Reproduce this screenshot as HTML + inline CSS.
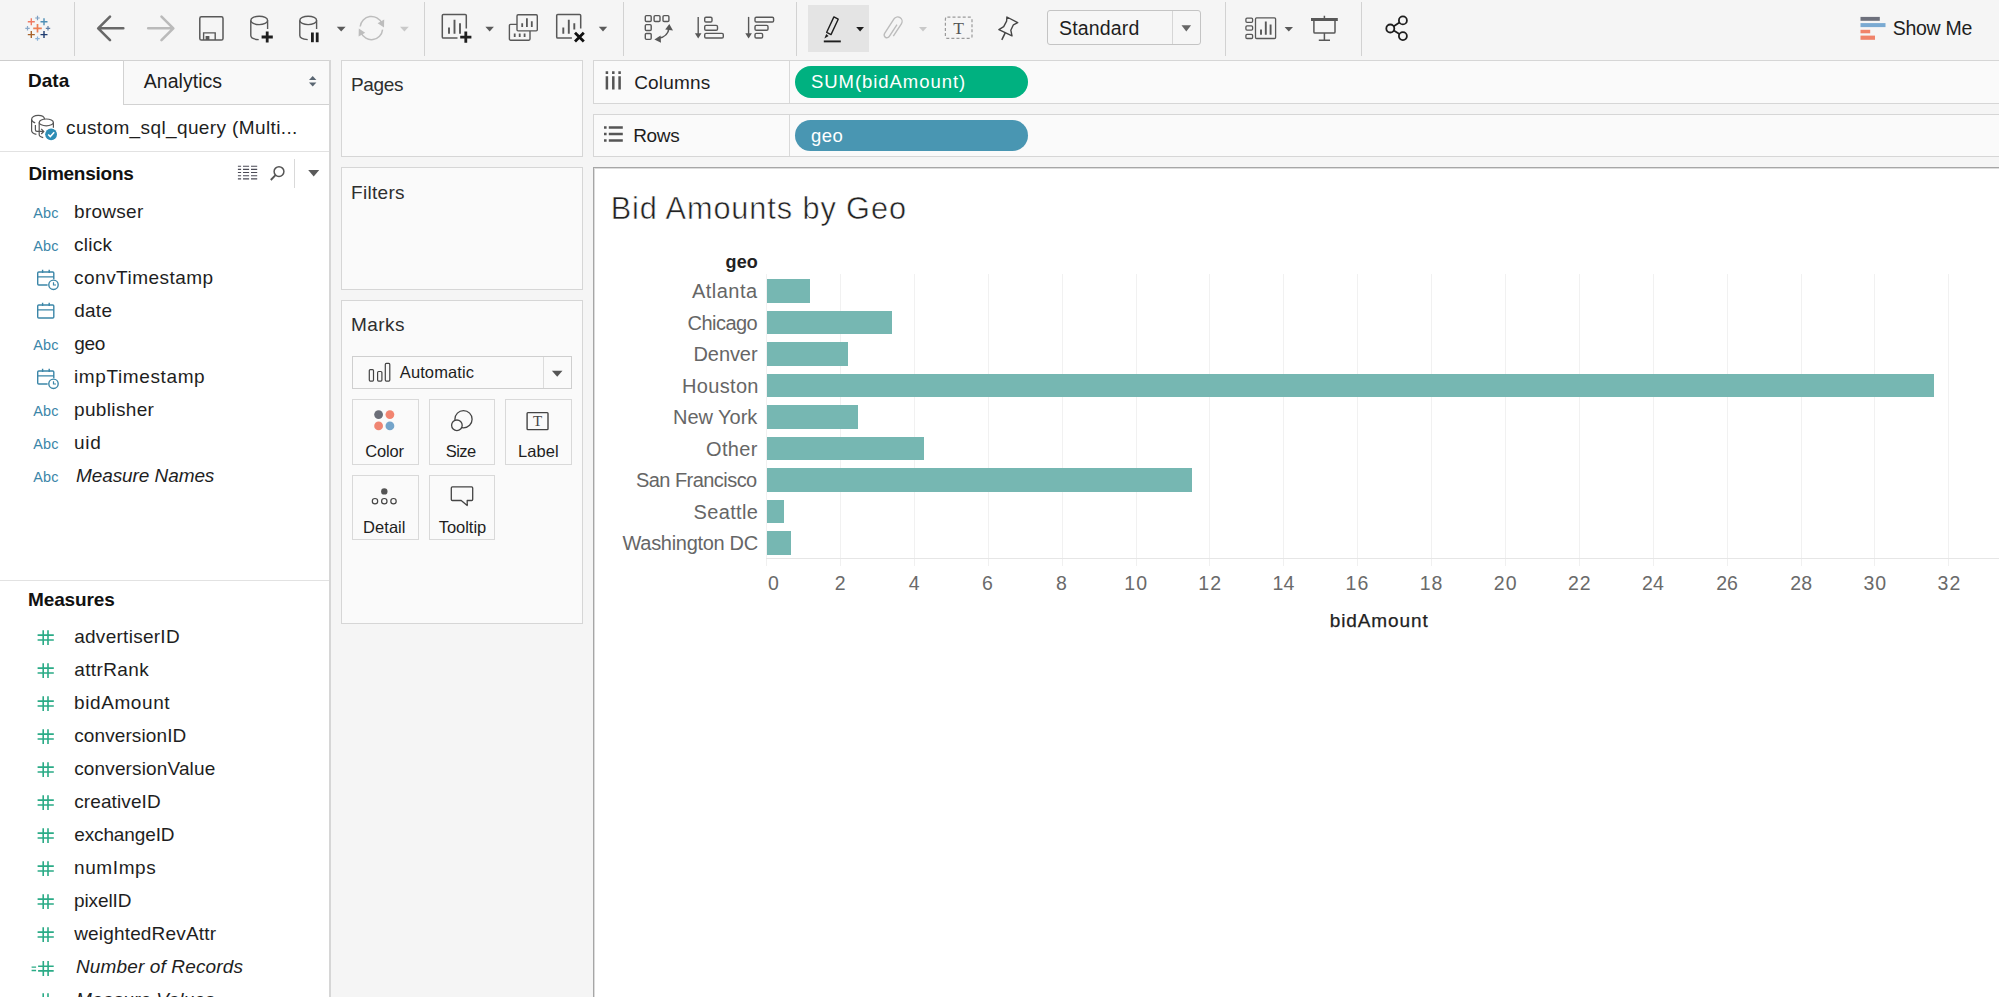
<!DOCTYPE html>
<html lang="en">
<head>
<meta charset="utf-8">
<title>Bid Amounts by Geo</title>
<style>
*{box-sizing:border-box;margin:0;padding:0}
html,body{width:1999px;height:997px;overflow:hidden}
body{position:relative;background:#f5f5f5;font-family:"Liberation Sans",sans-serif;color:#1e1e1e;font-size:18px}
.abs{position:absolute}
.t{position:absolute;white-space:nowrap;line-height:1}
#toolbar{left:0;top:0;width:1999px;height:60px;background:#f5f5f5}
.vsep{position:absolute;top:2px;width:1px;height:54px;background:#d2d2d2}
#left{left:0;top:60px;width:330px;height:937px;background:#fff;border-top:1px solid #cdcdcd}
#leftborder{left:329px;top:60px;width:2px;height:937px;background:#d6d6d6}
#antab{left:123px;top:60px;width:207px;height:45px;background:#f9f9f9;border:1px solid #d2d2d2;border-right:none}
.hline{position:absolute;left:0;width:329px;height:1px;background:#e2e2e2}
.card{position:absolute;background:#fafafa;border:1px solid #d6d6d6}
.mbtn{position:absolute;width:68px;height:66px;border:1px solid #d9d9d9;background:#fafafa}
.shelf{position:absolute;left:593px;width:1410px;height:43px;background:#fafafa;border:1px solid #d6d6d6}
.pill{position:absolute;left:795px;width:233px;border-radius:16px}
#viz{left:593px;top:167px;width:1410px;height:840px;background:#fff;border:1px solid #a6a6a6;box-shadow:inset 1px 1px 0 #dcdcdc}
.bar{position:absolute;left:767px;height:23.55px;background:#76b7b2}
.grid{position:absolute;top:274px;width:1px;height:284px;background:#f1f1f1}
.tick{position:absolute;top:559px;width:1px;height:7px;background:#f0f0f0}
</style>
</head>
<body>
<div id="toolbar" class="abs"></div>
<div class="vsep" style="left:74px"></div>
<div class="vsep" style="left:424px"></div>
<div class="vsep" style="left:623px"></div>
<div class="vsep" style="left:796px"></div>
<div class="vsep" style="left:1225px"></div>
<div class="vsep" style="left:1361px"></div>
<div class="abs" style="left:808px;top:5px;width:61px;height:47px;background:#e4e4e4"></div>
<div class="abs" style="left:1047px;top:10px;width:154px;height:35px;border:1px solid #c4c4c4;border-radius:3px;background:#f6f6f6"></div>
<div class="abs" style="left:1172px;top:11px;width:1px;height:33px;background:#d6d6d6"></div>
<svg class="abs" style="left:0;top:0" width="1999" height="60" viewBox="0 0 1999 60" fill="none" stroke-linecap="butt">
<path d="M33.2 28.3H41.8M37.5 24.0V32.6" stroke="#ec7f55" stroke-width="1.7" fill="none"/>
<path d="M35.3 18H39.7M37.5 15.8V20.2" stroke="#7d9fc2" stroke-width="1.2" fill="none"/>
<path d="M35.3 38.6H39.7M37.5 36.4V40.800000000000004" stroke="#8bb1d6" stroke-width="1.2" fill="none"/>
<path d="M25.3 28.3H29.7M27.5 26.1V30.5" stroke="#8ba9c9" stroke-width="1.2" fill="none"/>
<path d="M45.8 28.3H50.2M48 26.1V30.5" stroke="#5f80a8" stroke-width="1.2" fill="none"/>
<path d="M27.8 21.8H34.8M31.3 18.3V25.3" stroke="#ef7b64" stroke-width="1.4" fill="none"/>
<path d="M40.5 21.8H47.5M44 18.3V25.3" stroke="#4e8fb6" stroke-width="1.4" fill="none"/>
<path d="M27.8 34.6H34.8M31.3 31.1V38.1" stroke="#a8642c" stroke-width="1.4" fill="none"/>
<path d="M40.5 34.6H47.5M44 31.1V38.1" stroke="#1f3c70" stroke-width="1.4" fill="none"/>
<path d="M123.3 28.3H99M110 16.6L98.2 28.3L110 40.1" stroke="#686868" stroke-width="2.6" stroke-linecap="round" stroke-linejoin="round"/>
<path d="M148.2 28.3H172.5M161.5 16.6L173.3 28.3L161.5 40.1" stroke="#bababa" stroke-width="2.6" stroke-linecap="round" stroke-linejoin="round"/>
<rect x="199.8" y="16.8" width="23.2" height="23.2" rx="1.6" stroke="#585858" stroke-width="1.5"/>
<path d="M203.6 40V32.9H215.2V40" stroke="#585858" stroke-width="1.4"/><rect x="205.6" y="36" width="3.8" height="4" fill="#585858"/>
<ellipse cx="259.2" cy="20.4" rx="8.4" ry="4.2" stroke="#585858" stroke-width="1.4"/><path d="M250.79999999999998 20.4V35.6C250.79999999999998 37.8 254.2 39.4 258.7 39.6M267.59999999999997 20.4V29" stroke="#585858" stroke-width="1.4"/>
<path d="M261.59999999999997 37H272.8M267.2 31.4V42.6" stroke="#1e1e1e" stroke-width="2.8" fill="none"/>
<ellipse cx="308.2" cy="20.4" rx="8.4" ry="4.2" stroke="#585858" stroke-width="1.4"/><path d="M299.8 20.4V35.6C299.8 37.8 303.2 39.4 307.7 39.6M316.59999999999997 20.4V29" stroke="#585858" stroke-width="1.4"/>
<rect x="311" y="32.5" width="2.8" height="9.7" fill="#1e1e1e"/><rect x="315.8" y="32.5" width="2.8" height="9.7" fill="#1e1e1e"/>
<path d="M336.8 26.8H345.6L341.20000000000005 31.5Z" fill="#5a5a5a"/>
<path d="M360.2 26.5A11.3 11.3 0 0 1 381.8 23.2M382.6 29.6A11.3 11.3 0 0 1 361 32.8" stroke="#bdbdbd" stroke-width="1.5"/>
<path d="M384.2 19.6L384 27.6L377.6 23.2Z" fill="#bdbdbd"/><path d="M358.6 36.4L358.8 28.4L365.2 32.8Z" fill="#bdbdbd"/>
<path d="M400 26.8H408.8L404.4 31.5Z" fill="#c9c9c9"/>
<path d="M466.3 28.6V15.6Q466.3 14.5 465.2 14.5H443.40000000000003Q442.3 14.5 442.3 15.6V36.9Q442.3 38 443.40000000000003 38H457.5" stroke="#585858" stroke-width="1.5"/>
<path d="M449 27.5V33.8M454.5 19.8V33.8M460 23.2V33.8" stroke="#585858" stroke-width="1.9"/>
<path d="M460.2 37.1H471.40000000000003M465.8 31.5V42.7" stroke="#1e1e1e" stroke-width="2.8" fill="none"/>
<path d="M485.4 26.8H493.9L489.65 31.5Z" fill="#5a5a5a"/>
<rect x="517" y="14.8" width="20.3" height="16.1" rx="1.1" stroke="#585858" stroke-width="1.4"/>
<path d="M522.2 23.2V26.9M526.9 18.2V26.9M531.8 21.3V26.9" stroke="#585858" stroke-width="1.8"/>
<path d="M517 24.4H510.5Q509.4 24.4 509.4 25.5V39.1Q509.4 40.2 510.5 40.2H528.9Q530 40.2 530 39.1V31" stroke="#585858" stroke-width="1.4"/>
<path d="M514.7 33.6V36.9M519.7 33.6V36.9M524.6 33.6V36.9" stroke="#585858" stroke-width="1.8"/>
<path d="M580.7 28.6V15.6Q580.7 14.5 579.6 14.5H557.8000000000001Q556.7 14.5 556.7 15.6V36.9Q556.7 38 557.8000000000001 38H571.9000000000001" stroke="#585858" stroke-width="1.5"/>
<path d="M563.3 27.5V33.8M568.8 19.8V33.8M574.3 23.2V29.4" stroke="#585858" stroke-width="1.9"/>
<path d="M575 32.7L583.8 41.5M583.8 32.7L575 41.5" stroke="#111" stroke-width="2.8"/>
<path d="M598.8 26.8H607.2L603.0 31.5Z" fill="#5a5a5a"/>
<rect x="645.3" y="15.6" width="5.9" height="5.9" rx="1.1" stroke="#585858" stroke-width="1.4"/>
<rect x="654.1" y="15.6" width="5.9" height="5.9" rx="1.1" stroke="#585858" stroke-width="1.4"/>
<rect x="663" y="15.6" width="5.9" height="5.9" rx="1.1" stroke="#585858" stroke-width="1.4"/>
<rect x="645.3" y="24.6" width="5.9" height="5.9" rx="1.1" stroke="#585858" stroke-width="1.4"/>
<rect x="645.3" y="33.5" width="5.9" height="5.9" rx="1.1" stroke="#585858" stroke-width="1.4"/>
<path d="M658.5 38.2Q668 36.6 668.9 28.5" stroke="#585858" stroke-width="1.6"/>
<path d="M669.3 24L673 30.6L665.2 29.6Z" fill="#585858"/><path d="M654.4 39.4L660.6 35.4L661 42.8Z" fill="#585858"/>
<path d="M698.2 16.9V35" stroke="#585858" stroke-width="1.4"/><path d="M694.9000000000001 33.2H701.5L698.2 38.6Z" fill="#585858"/><rect x="704.7" y="17.2" width="7.3" height="4.8" rx="1.3" stroke="#585858" stroke-width="1.4"/><rect x="704.7" y="25.4" width="12.8" height="4.8" rx="1.3" stroke="#585858" stroke-width="1.4"/><rect x="704.7" y="33.4" width="18.6" height="4.6" rx="1.3" stroke="#585858" stroke-width="1.4"/>
<path d="M748.6 16.9V35" stroke="#585858" stroke-width="1.4"/><path d="M745.3000000000001 33.2H751.9L748.6 38.6Z" fill="#585858"/><rect x="755" y="17.2" width="18.6" height="4.8" rx="1.3" stroke="#585858" stroke-width="1.4"/><rect x="755" y="25.4" width="13" height="4.8" rx="1.3" stroke="#585858" stroke-width="1.4"/><rect x="755" y="33.4" width="7.6" height="4.6" rx="1.3" stroke="#585858" stroke-width="1.4"/>
<path d="M833.9 16.9L838.2 19.2L831 34.6L826.7 32.3Z" stroke="#1e1e1e" stroke-width="1.4" stroke-linejoin="round"/>
<path d="M826.2 34L824.4 38.6L828.6 36Z" fill="#1e1e1e"/>
<path d="M823.8 41.4H840.8" stroke="#1e1e1e" stroke-width="1.9"/>
<path d="M856.2 27H864L860.1 31.6Z" fill="#1e1e1e"/>
<g transform="translate(893 28.6) rotate(33)"><path d="M1.2 -5.5V8.6A2.8 2.8 0 0 1 -4.4 8.6V-8.6A4.4 4.4 0 0 1 4.4 -8.6V6.2" stroke="#bcbcbc" stroke-width="1.4"/></g>
<path d="M919 27H927L923.0 31.6Z" fill="#c9c9c9"/>
<rect x="945.4" y="17.1" width="26.6" height="21.3" rx="2" stroke="#9a9a9a" stroke-width="1.2" stroke-dasharray="3 2.1"/>
<text x="958.7" y="34.2" text-anchor="middle" font-family="Liberation Serif, serif" font-size="17.5" fill="#555">T</text>
<path d="M1006.9 17L1017.7 22.7L1013.4 24.8L1010.8 30.2L1012 35.8L998.9 29.6L1003.7 26.6L1006.6 21.2Z" stroke="#444" stroke-width="1.4" stroke-linejoin="round"/><path d="M1005.2 32.8L1001.8 39.8" stroke="#444" stroke-width="1.5"/>
<path d="M1181.5 25.2H1191.1L1186.3 31.4Z" fill="#666"/>
<rect x="1245.9" y="18.1" width="6.7" height="4.2" rx="1.1" stroke="#585858" stroke-width="1.3"/>
<rect x="1245.9" y="25.9" width="6.7" height="4.2" rx="1.1" stroke="#585858" stroke-width="1.3"/>
<rect x="1245.9" y="34.3" width="6.7" height="4.2" rx="1.1" stroke="#585858" stroke-width="1.3"/>
<rect x="1255.5" y="17.9" width="20.1" height="20.6" rx="1.1" stroke="#585858" stroke-width="1.3"/>
<path d="M1261 29.4V34.8M1265.8 21.6V34.8M1270.6 24.6V34.8" stroke="#585858" stroke-width="1.9"/>
<path d="M1284.6 27H1293L1288.8 31.6Z" fill="#5a5a5a"/>
<rect x="1311" y="18" width="26.8" height="3" fill="#585858"/><path d="M1324.4 15.8V18M1313.9 21V31.9Q1313.9 33 1315 33H1333.9Q1335 33 1335 31.9V21M1324.4 33V40.2M1318.8 40.2H1330" stroke="#585858" stroke-width="1.5"/>
<circle cx="1402.9" cy="20.4" r="4" stroke="#1e1e1e" stroke-width="1.8"/><circle cx="1390.3" cy="28.5" r="4" stroke="#1e1e1e" stroke-width="1.8"/><circle cx="1402.9" cy="36.1" r="4" stroke="#1e1e1e" stroke-width="1.8"/><path d="M1393.8 26.3L1399.4 22.6M1393.8 30.6L1399.4 34" stroke="#1e1e1e" stroke-width="1.8"/>
<rect x="1860.5" y="16.9" width="19.3" height="3.9" fill="#6d707c"/><rect x="1860.5" y="23.1" width="25" height="4" fill="#7aaad2"/><rect x="1860.5" y="29.8" width="9.7" height="3.5" fill="#f0836a"/><rect x="1860.5" y="35.6" width="14.5" height="4.2" fill="#f0836a"/>
</svg>

<div id="left" class="abs"></div>
<div id="antab" class="abs"></div>
<div id="leftborder" class="abs"></div>
<div class="hline" style="top:151px"></div>
<div class="abs" style="left:294px;top:159px;width:1px;height:29px;background:#d9d9d9"></div>
<div class="hline" style="top:580px"></div>
<svg class="abs" style="left:0;top:60px" width="330" height="937" viewBox="0 60 330 937" fill="none">
<path d="M309 79.9H316.4L312.7 75.9Z" fill="#5a6672"/><path d="M309 82.5H316.4L312.7 86.5Z" fill="#5a6672"/>
<path d="M44.6 119.2C44.3 116.9 41.6 115.4 38.2 115.4C34.5 115.4 31.6 117.2 31.6 119.4V130.6C31.6 132.4 33.6 133.8 36.4 134.3" stroke="#555" stroke-width="1.2"/>
<path d="M31.6 119.6C31.6 121 33 122.2 35.2 122.8" stroke="#555" stroke-width="1.2"/>
<ellipse cx="46.3" cy="122.4" rx="7.1" ry="3.4" stroke="#555" stroke-width="1.2"/>
<path d="M39.2 122.4V134.8C39.2 135.9 40.6 137 43.2 137.6M53.4 122.4V127.8" stroke="#555" stroke-width="1.2"/>
<path d="M35.4 125V129.8Q35.4 131.4 37 131.4H43.4M41.2 128.8L43.8 131.4L41.2 134" stroke="#555" stroke-width="1.2"/>
<circle cx="51.1" cy="134.3" r="5.9" fill="#2d8db5"/><path d="M48.2 134.4L50.3 136.6L54.2 132.2" stroke="#fff" stroke-width="1.5"/>
<path d="M237.9 166.20H241.1M243 166.20H249.1M251 166.20H257.2" stroke="#4a4a55" stroke-width="1.1"/>
<path d="M237.9 169.37H241.1M243 169.37H249.1M251 169.37H257.2" stroke="#4a4a55" stroke-width="1.1"/>
<path d="M237.9 172.54H241.1M243 172.54H249.1M251 172.54H257.2" stroke="#4a4a55" stroke-width="1.1"/>
<path d="M237.9 175.71H241.1M243 175.71H249.1M251 175.71H257.2" stroke="#4a4a55" stroke-width="1.1"/>
<path d="M237.9 178.88H241.1M243 178.88H249.1M251 178.88H257.2" stroke="#4a4a55" stroke-width="1.1"/>
<circle cx="279" cy="171.6" r="4.9" stroke="#555" stroke-width="1.5"/><path d="M275.5 175.2L270.8 180" stroke="#555" stroke-width="1.9"/>
<path d="M308.2 170H319.2L313.7 176.4Z" fill="#5a5a5a"/>
<text x="33.3" y="218.0" font-family="Liberation Sans, sans-serif" font-size="14.4" fill="#3b86a8" letter-spacing="0.15">Abc</text>
<text x="33.3" y="251.0" font-family="Liberation Sans, sans-serif" font-size="14.4" fill="#3b86a8" letter-spacing="0.15">Abc</text>
<path d="M47.6 285.0H38.8Q37.7 285.0 37.7 283.9V273.1Q37.7 272.0 38.8 272.0H52.7Q53.8 272.0 53.8 273.1V279.3M37.7 276.90000000000003H53.8M42.6 269.7V273.0M49.2 269.7V273.0" stroke="#3b86a8" stroke-width="1.4"/><circle cx="53.5" cy="284.8" r="4.7" fill="#fff" stroke="#3b86a8" stroke-width="1.4"/><path d="M53.5 282.20000000000005V285.0H56" stroke="#3b86a8" stroke-width="1.2"/>
<rect x="37.7" y="305.0" width="16.1" height="13.0" rx="1.1" stroke="#3b86a8" stroke-width="1.4"/><path d="M37.7 309.90000000000003H53.8M42.6 302.7V306.0M49.2 302.7V306.0" stroke="#3b86a8" stroke-width="1.4"/>
<text x="33.3" y="350.0" font-family="Liberation Sans, sans-serif" font-size="14.4" fill="#3b86a8" letter-spacing="0.15">Abc</text>
<path d="M47.6 384.0H38.8Q37.7 384.0 37.7 382.9V372.1Q37.7 371.0 38.8 371.0H52.7Q53.8 371.0 53.8 372.1V378.3M37.7 375.90000000000003H53.8M42.6 368.7V372.0M49.2 368.7V372.0" stroke="#3b86a8" stroke-width="1.4"/><circle cx="53.5" cy="383.8" r="4.7" fill="#fff" stroke="#3b86a8" stroke-width="1.4"/><path d="M53.5 381.20000000000005V384.0H56" stroke="#3b86a8" stroke-width="1.2"/>
<text x="33.3" y="416.0" font-family="Liberation Sans, sans-serif" font-size="14.4" fill="#3b86a8" letter-spacing="0.15">Abc</text>
<text x="33.3" y="449.0" font-family="Liberation Sans, sans-serif" font-size="14.4" fill="#3b86a8" letter-spacing="0.15">Abc</text>
<text x="33.3" y="482.0" font-family="Liberation Sans, sans-serif" font-size="14.4" fill="#3b86a8" letter-spacing="0.15">Abc</text>
<path d="M37.6 635.1H53.8M37.6 640.0H53.8M43.2 630.2V644.9M48 630.2V644.9" stroke="#2aab86" stroke-width="1.6"/>
<path d="M37.6 668.1H53.8M37.6 673.0H53.8M43.2 663.2V677.9M48 663.2V677.9" stroke="#2aab86" stroke-width="1.6"/>
<path d="M37.6 701.1H53.8M37.6 706.0H53.8M43.2 696.2V710.9M48 696.2V710.9" stroke="#2aab86" stroke-width="1.6"/>
<path d="M37.6 734.1H53.8M37.6 739.0H53.8M43.2 729.2V743.9M48 729.2V743.9" stroke="#2aab86" stroke-width="1.6"/>
<path d="M37.6 767.1H53.8M37.6 772.0H53.8M43.2 762.2V776.9M48 762.2V776.9" stroke="#2aab86" stroke-width="1.6"/>
<path d="M37.6 800.1H53.8M37.6 805.0H53.8M43.2 795.2V809.9M48 795.2V809.9" stroke="#2aab86" stroke-width="1.6"/>
<path d="M37.6 833.1H53.8M37.6 838.0H53.8M43.2 828.2V842.9M48 828.2V842.9" stroke="#2aab86" stroke-width="1.6"/>
<path d="M37.6 866.1H53.8M37.6 871.0H53.8M43.2 861.2V875.9M48 861.2V875.9" stroke="#2aab86" stroke-width="1.6"/>
<path d="M37.6 899.1H53.8M37.6 904.0H53.8M43.2 894.2V908.9M48 894.2V908.9" stroke="#2aab86" stroke-width="1.6"/>
<path d="M37.6 932.1H53.8M37.6 937.0H53.8M43.2 927.2V941.9M48 927.2V941.9" stroke="#2aab86" stroke-width="1.6"/>
<path d="M37.6 998.1H53.8M37.6 1003.0H53.8M43.2 993.2V1007.9M48 993.2V1007.9" stroke="#2aab86" stroke-width="1.6"/>
<path d="M38.1 966.3000000000001H53.7M38.1 970.9H53.7M43.3 961.1V976.1M48.1 961.1V976.1" stroke="#2aab86" stroke-width="1.6"/><path d="M31.6 967.1H36.1M31.6 970.5H36.1" stroke="#2aab86" stroke-width="1.3"/>
</svg>

<div class="card" style="left:341px;top:60px;width:242px;height:97px"></div>
<div class="card" style="left:341px;top:167px;width:242px;height:123px"></div>
<div class="card" style="left:341px;top:300px;width:242px;height:324px"></div>
<div class="abs" style="left:352px;top:356px;width:220px;height:33px;border:1px solid #cfcfcf;background:#fafafa"></div>
<div class="abs" style="left:543px;top:357px;width:1px;height:31px;background:#dcdcdc"></div>
<div class="mbtn" style="left:352px;top:399px;width:67px"></div>
<div class="mbtn" style="left:429px;top:399px;width:66px"></div>
<div class="mbtn" style="left:505px;top:399px;width:67px"></div>
<div class="mbtn" style="left:352px;top:475px;width:67px;height:65px"></div>
<div class="mbtn" style="left:429px;top:475px;width:66px;height:65px"></div>

<div class="shelf" style="top:60px;height:44px"></div>
<div class="shelf" style="top:114px"></div>
<div class="abs" style="left:789px;top:61px;width:1px;height:42px;background:#d9d9d9"></div>
<div class="abs" style="left:789px;top:115px;width:1px;height:41px;background:#d9d9d9"></div>
<div class="pill" style="top:66px;height:32px;background:#00b180"></div>
<div class="pill" style="top:120px;height:31px;background:#4996b2"></div>
<svg class="abs" style="left:340px;top:60px" width="500" height="570" viewBox="340 60 500 570" fill="none">
<rect x="369.3" y="369.6" width="4.2" height="11.5" rx="1" stroke="#444" stroke-width="1.2"/><rect x="377.6" y="371.5" width="4.3" height="9.6" rx="1" stroke="#444" stroke-width="1.2"/><rect x="385.3" y="363.4" width="4.5" height="17.7" rx="1" stroke="#444" stroke-width="1.2"/>
<path d="M551.9 370.7H562.5L557.2 376.7Z" fill="#555"/>
<circle cx="378.6" cy="414.6" r="4.4" fill="#6b6e78"/><circle cx="389.9" cy="414.6" r="4.4" fill="#f28470"/><circle cx="378.6" cy="425.9" r="4.4" fill="#ef8572"/><circle cx="389.9" cy="425.9" r="4.4" fill="#74a4ca"/>
<circle cx="463.5" cy="419.2" r="8.6" stroke="#444" stroke-width="1.3"/><circle cx="456.9" cy="425.3" r="5.3" fill="#fafafa" stroke="#444" stroke-width="1.3"/>
<rect x="527.1" y="412.6" width="20.9" height="17" rx="0.8" stroke="#444" stroke-width="1.4"/><text x="537.6" y="426.4" text-anchor="middle" font-family="Liberation Serif, serif" font-size="15" fill="#444">T</text>
<circle cx="384.3" cy="491.4" r="3.2" fill="#555"/><circle cx="375" cy="501.2" r="2.7" stroke="#444" stroke-width="1.2"/><circle cx="384.3" cy="501.2" r="2.7" stroke="#444" stroke-width="1.2"/><circle cx="393.5" cy="501.2" r="2.7" stroke="#444" stroke-width="1.2"/>
<path d="M452.4 486.9H471.6Q472.7 486.9 472.7 488V499.4Q472.7 500.5 471.6 500.5H467.2V505.6L461.2 500.5H452.4Q451.3 500.5 451.3 499.4V488Q451.3 486.9 452.4 486.9Z" stroke="#444" stroke-width="1.3" stroke-linejoin="round"/>
<path d="M606.9 71.2V74M606.9 76.2V89.5" stroke="#555" stroke-width="2.5"/>
<path d="M613.3 71.2V74M613.3 76.2V89.5" stroke="#555" stroke-width="2.5"/>
<path d="M619.6 71.2V74M619.6 76.2V89.5" stroke="#555" stroke-width="2.5"/>
<path d="M604 127.4H606.6M608.8 127.4H622.8" stroke="#555" stroke-width="2.5"/>
<path d="M604 134H606.6M608.8 134H622.8" stroke="#555" stroke-width="2.5"/>
<path d="M604 140.5H606.6M608.8 140.5H622.8" stroke="#555" stroke-width="2.5"/>
</svg>

<div id="viz" class="abs"></div>
<div class="grid" style="left:766.1px"></div><div class="grid" style="left:840.0px"></div><div class="grid" style="left:913.9px"></div><div class="grid" style="left:987.8px"></div><div class="grid" style="left:1061.7px"></div><div class="grid" style="left:1135.5px"></div><div class="grid" style="left:1209.4px"></div><div class="grid" style="left:1283.3px"></div><div class="grid" style="left:1357.2px"></div><div class="grid" style="left:1431.1px"></div><div class="grid" style="left:1505.0px"></div><div class="grid" style="left:1578.9px"></div><div class="grid" style="left:1652.8px"></div><div class="grid" style="left:1726.7px"></div><div class="grid" style="left:1800.6px"></div><div class="grid" style="left:1874.4px"></div><div class="grid" style="left:1948.3px"></div>
<div class="abs" style="left:766px;top:558px;width:1233px;height:1px;background:#e6e6e6"></div>
<div class="tick" style="left:766.1px"></div><div class="tick" style="left:840.0px"></div><div class="tick" style="left:913.9px"></div><div class="tick" style="left:987.8px"></div><div class="tick" style="left:1061.7px"></div><div class="tick" style="left:1135.5px"></div><div class="tick" style="left:1209.4px"></div><div class="tick" style="left:1283.3px"></div><div class="tick" style="left:1357.2px"></div><div class="tick" style="left:1431.1px"></div><div class="tick" style="left:1505.0px"></div><div class="tick" style="left:1578.9px"></div><div class="tick" style="left:1652.8px"></div><div class="tick" style="left:1726.7px"></div><div class="tick" style="left:1800.6px"></div><div class="tick" style="left:1874.4px"></div><div class="tick" style="left:1948.3px"></div>
<div class="bar" style="top:279.05px;width:43px"></div><div class="bar" style="top:310.57px;width:125px"></div><div class="bar" style="top:342.10px;width:81px"></div><div class="bar" style="top:373.62px;width:1167px"></div><div class="bar" style="top:405.15px;width:90.5px"></div><div class="bar" style="top:436.68px;width:157px"></div><div class="bar" style="top:468.20px;width:424.5px"></div><div class="bar" style="top:499.73px;width:16.6px"></div><div class="bar" style="top:531.25px;width:24.4px"></div>

<div id="std" class="t" style="left:1059.00px;top:19.10px;font-size:19.5px;letter-spacing:0.173px;color:#1e1e1e;">Standard</div>
<div id="showme" class="t" style="left:1892.80px;top:18.96px;font-size:19.5px;letter-spacing:-0.301px;color:#1e1e1e;">Show Me</div>
<div id="data" class="t" style="left:27.90px;top:70.82px;font-size:19px;letter-spacing:0.067px;font-weight:bold;color:#111;">Data</div>
<div id="analytics" class="t" style="left:143.70px;top:71.89px;font-size:19.5px;letter-spacing:0.050px;color:#1e1e1e;">Analytics</div>
<div id="ds" class="t" style="left:66.10px;top:117.94px;font-size:19px;letter-spacing:0.380px;color:#1e1e1e;">custom_sql_query (Multi...</div>
<div id="dims" class="t" style="left:28.40px;top:164.12px;font-size:19px;letter-spacing:-0.245px;font-weight:bold;color:#111;">Dimensions</div>
<div id="meas" class="t" style="left:28.00px;top:589.92px;font-size:19px;letter-spacing:-0.114px;font-weight:bold;color:#111;">Measures</div>
<div id="d0" class="t" style="left:74.10px;top:201.62px;font-size:19px;letter-spacing:0.266px;color:#1e1e1e;">browser</div>
<div id="d1" class="t" style="left:74.10px;top:234.62px;font-size:19px;letter-spacing:0.250px;color:#1e1e1e;">click</div>
<div id="d2" class="t" style="left:74.10px;top:267.62px;font-size:19px;letter-spacing:0.467px;color:#1e1e1e;">convTimestamp</div>
<div id="d3" class="t" style="left:74.20px;top:300.62px;font-size:19px;letter-spacing:0.267px;color:#1e1e1e;">date</div>
<div id="d4" class="t" style="left:74.20px;top:333.62px;font-size:19px;letter-spacing:-0.300px;color:#1e1e1e;">geo</div>
<div id="d5" class="t" style="left:74.00px;top:366.62px;font-size:19px;letter-spacing:0.618px;color:#1e1e1e;">impTimestamp</div>
<div id="d6" class="t" style="left:74.00px;top:399.62px;font-size:19px;letter-spacing:0.351px;color:#1e1e1e;">publisher</div>
<div id="d7" class="t" style="left:74.00px;top:432.62px;font-size:19px;letter-spacing:0.700px;color:#1e1e1e;">uid</div>
<div id="d8" class="t" style="left:76.00px;top:465.62px;font-size:19px;letter-spacing:-0.084px;color:#1e1e1e;font-style:italic;">Measure Names</div>
<div id="m0" class="t" style="left:74.20px;top:626.62px;font-size:19px;letter-spacing:0.273px;color:#1e1e1e;">advertiserID</div>
<div id="m1" class="t" style="left:74.20px;top:659.62px;font-size:19px;letter-spacing:0.400px;color:#1e1e1e;">attrRank</div>
<div id="m2" class="t" style="left:74.00px;top:692.62px;font-size:19px;letter-spacing:0.601px;color:#1e1e1e;">bidAmount</div>
<div id="m3" class="t" style="left:74.20px;top:725.62px;font-size:19px;letter-spacing:0.109px;color:#1e1e1e;">conversionID</div>
<div id="m4" class="t" style="left:74.20px;top:758.62px;font-size:19px;letter-spacing:0.143px;color:#1e1e1e;">conversionValue</div>
<div id="m5" class="t" style="left:74.20px;top:791.62px;font-size:19px;letter-spacing:0.111px;color:#1e1e1e;">creativeID</div>
<div id="m6" class="t" style="left:74.20px;top:824.62px;font-size:19px;letter-spacing:-0.112px;color:#1e1e1e;">exchangeID</div>
<div id="m7" class="t" style="left:74.00px;top:857.62px;font-size:19px;letter-spacing:0.600px;color:#1e1e1e;">numImps</div>
<div id="m8" class="t" style="left:74.00px;top:890.62px;font-size:19px;letter-spacing:-0.100px;color:#1e1e1e;">pixelID</div>
<div id="m9" class="t" style="left:74.20px;top:923.62px;font-size:19px;letter-spacing:0.171px;color:#1e1e1e;">weightedRevAttr</div>
<div id="m10" class="t" style="left:76.00px;top:956.62px;font-size:19px;letter-spacing:0.137px;color:#1e1e1e;font-style:italic;">Number of Records</div>
<div id="m11" class="t" style="left:76.00px;top:989.62px;font-size:19px;letter-spacing:0.140px;color:#1e1e1e;font-style:italic;">Measure Values</div>
<div id="pages" class="t" style="left:351.00px;top:75.22px;font-size:19px;letter-spacing:-0.350px;color:#2e2e2e;">Pages</div>
<div id="filters" class="t" style="left:351.00px;top:182.72px;font-size:19px;letter-spacing:0.300px;color:#2e2e2e;">Filters</div>
<div id="marks" class="t" style="left:351.00px;top:315.22px;font-size:19px;letter-spacing:0.450px;color:#2e2e2e;">Marks</div>
<div id="auto" class="t" style="left:399.80px;top:364.43px;font-size:16.5px;letter-spacing:0.099px;color:#1e1e1e;">Automatic</div>
<div id="color" class="t" style="left:365.30px;top:442.93px;font-size:16.5px;letter-spacing:-0.200px;color:#1e1e1e;">Color</div>
<div id="size" class="t" style="left:445.80px;top:442.93px;font-size:16.5px;letter-spacing:-0.600px;color:#1e1e1e;">Size</div>
<div id="label" class="t" style="left:517.90px;top:442.93px;font-size:16.5px;letter-spacing:0.100px;color:#1e1e1e;">Label</div>
<div id="detail" class="t" style="left:363.10px;top:519.23px;font-size:16.5px;letter-spacing:0.040px;color:#1e1e1e;">Detail</div>
<div id="tooltip" class="t" style="left:438.70px;top:519.23px;font-size:16.5px;letter-spacing:-0.033px;color:#1e1e1e;">Tooltip</div>
<div id="cols" class="t" style="left:634.20px;top:72.92px;font-size:19px;letter-spacing:0.199px;color:#1e1e1e;">Columns</div>
<div id="rows" class="t" style="left:633.20px;top:126.01px;font-size:19px;letter-spacing:-0.333px;color:#1e1e1e;">Rows</div>
<div id="pill1" class="t" style="left:811.00px;top:73.36px;font-size:18.5px;letter-spacing:0.944px;color:#fff;">SUM(bidAmount)</div>
<div id="pill2" class="t" style="left:811.00px;top:127.36px;font-size:18.5px;letter-spacing:0.400px;color:#fff;">geo</div>
<div id="title" class="t" style="left:610.70px;top:193.71px;font-size:30.7px;letter-spacing:0.912px;color:#222;-webkit-text-stroke:0.55px #fff;">Bid Amounts by Geo</div>
<div id="geoh" class="t" style="left:725.60px;top:252.96px;font-size:18px;letter-spacing:0.050px;font-weight:bold;color:#222;">geo</div>
<div id="r0" class="t" style="left:692.00px;top:281.17px;font-size:20px;letter-spacing:0.466px;color:#666;">Atlanta</div>
<div id="r1" class="t" style="left:687.50px;top:312.69px;font-size:20px;letter-spacing:-0.533px;color:#666;">Chicago</div>
<div id="r2" class="t" style="left:693.50px;top:344.22px;font-size:20px;letter-spacing:-0.080px;color:#666;">Denver</div>
<div id="r3" class="t" style="left:682.00px;top:375.75px;font-size:20px;letter-spacing:0.333px;color:#666;">Houston</div>
<div id="r4" class="t" style="left:673.00px;top:407.27px;font-size:20px;letter-spacing:-0.027px;color:#666;">New York</div>
<div id="r5" class="t" style="left:706.00px;top:438.80px;font-size:20px;letter-spacing:0.350px;color:#666;">Other</div>
<div id="r6" class="t" style="left:636.00px;top:470.32px;font-size:20px;letter-spacing:-0.550px;color:#666;">San Francisco</div>
<div id="r7" class="t" style="left:693.50px;top:501.84px;font-size:20px;letter-spacing:0.366px;color:#666;">Seattle</div>
<div id="r8" class="t" style="left:622.50px;top:533.37px;font-size:20px;letter-spacing:-0.301px;color:#666;">Washington DC</div>
<div id="x0" class="t" style="left:768.00px;top:573.70px;font-size:19.5px;letter-spacing:0.000px;color:#6a6a6a;">0</div>
<div id="x1" class="t" style="left:834.72px;top:573.74px;font-size:19.5px;letter-spacing:0.000px;color:#6a6a6a;">2</div>
<div id="x2" class="t" style="left:908.84px;top:573.70px;font-size:19.5px;letter-spacing:0.000px;color:#6a6a6a;">4</div>
<div id="x3" class="t" style="left:981.96px;top:573.76px;font-size:19.5px;letter-spacing:0.000px;color:#6a6a6a;">6</div>
<div id="x4" class="t" style="left:1056.08px;top:573.70px;font-size:19.5px;letter-spacing:0.000px;color:#6a6a6a;">8</div>
<div id="x5" class="t" style="left:1124.20px;top:573.76px;font-size:19.5px;letter-spacing:1.100px;color:#6a6a6a;">10</div>
<div id="x6" class="t" style="left:1198.32px;top:573.74px;font-size:19.5px;letter-spacing:1.100px;color:#6a6a6a;">12</div>
<div id="x7" class="t" style="left:1272.44px;top:573.71px;font-size:19.5px;letter-spacing:0.100px;color:#6a6a6a;">14</div>
<div id="x8" class="t" style="left:1345.56px;top:573.74px;font-size:19.5px;letter-spacing:1.100px;color:#6a6a6a;">16</div>
<div id="x9" class="t" style="left:1419.68px;top:573.71px;font-size:19.5px;letter-spacing:1.100px;color:#6a6a6a;">18</div>
<div id="x10" class="t" style="left:1493.80px;top:573.76px;font-size:19.5px;letter-spacing:1.100px;color:#6a6a6a;">20</div>
<div id="x11" class="t" style="left:1567.92px;top:573.70px;font-size:19.5px;letter-spacing:1.100px;color:#6a6a6a;">22</div>
<div id="x12" class="t" style="left:1642.04px;top:573.76px;font-size:19.5px;letter-spacing:0.100px;color:#6a6a6a;">24</div>
<div id="x13" class="t" style="left:1716.16px;top:573.70px;font-size:19.5px;letter-spacing:0.100px;color:#6a6a6a;">26</div>
<div id="x14" class="t" style="left:1790.28px;top:573.71px;font-size:19.5px;letter-spacing:0.100px;color:#6a6a6a;">28</div>
<div id="x15" class="t" style="left:1863.40px;top:573.74px;font-size:19.5px;letter-spacing:1.100px;color:#6a6a6a;">30</div>
<div id="x16" class="t" style="left:1937.52px;top:573.71px;font-size:19.5px;letter-spacing:1.100px;color:#6a6a6a;">32</div>
<div id="xt" class="t" style="left:1329.80px;top:610.81px;font-size:19px;letter-spacing:0.883px;color:#222;-webkit-text-stroke:0.25px #222;">bidAmount</div>
</body>
</html>
